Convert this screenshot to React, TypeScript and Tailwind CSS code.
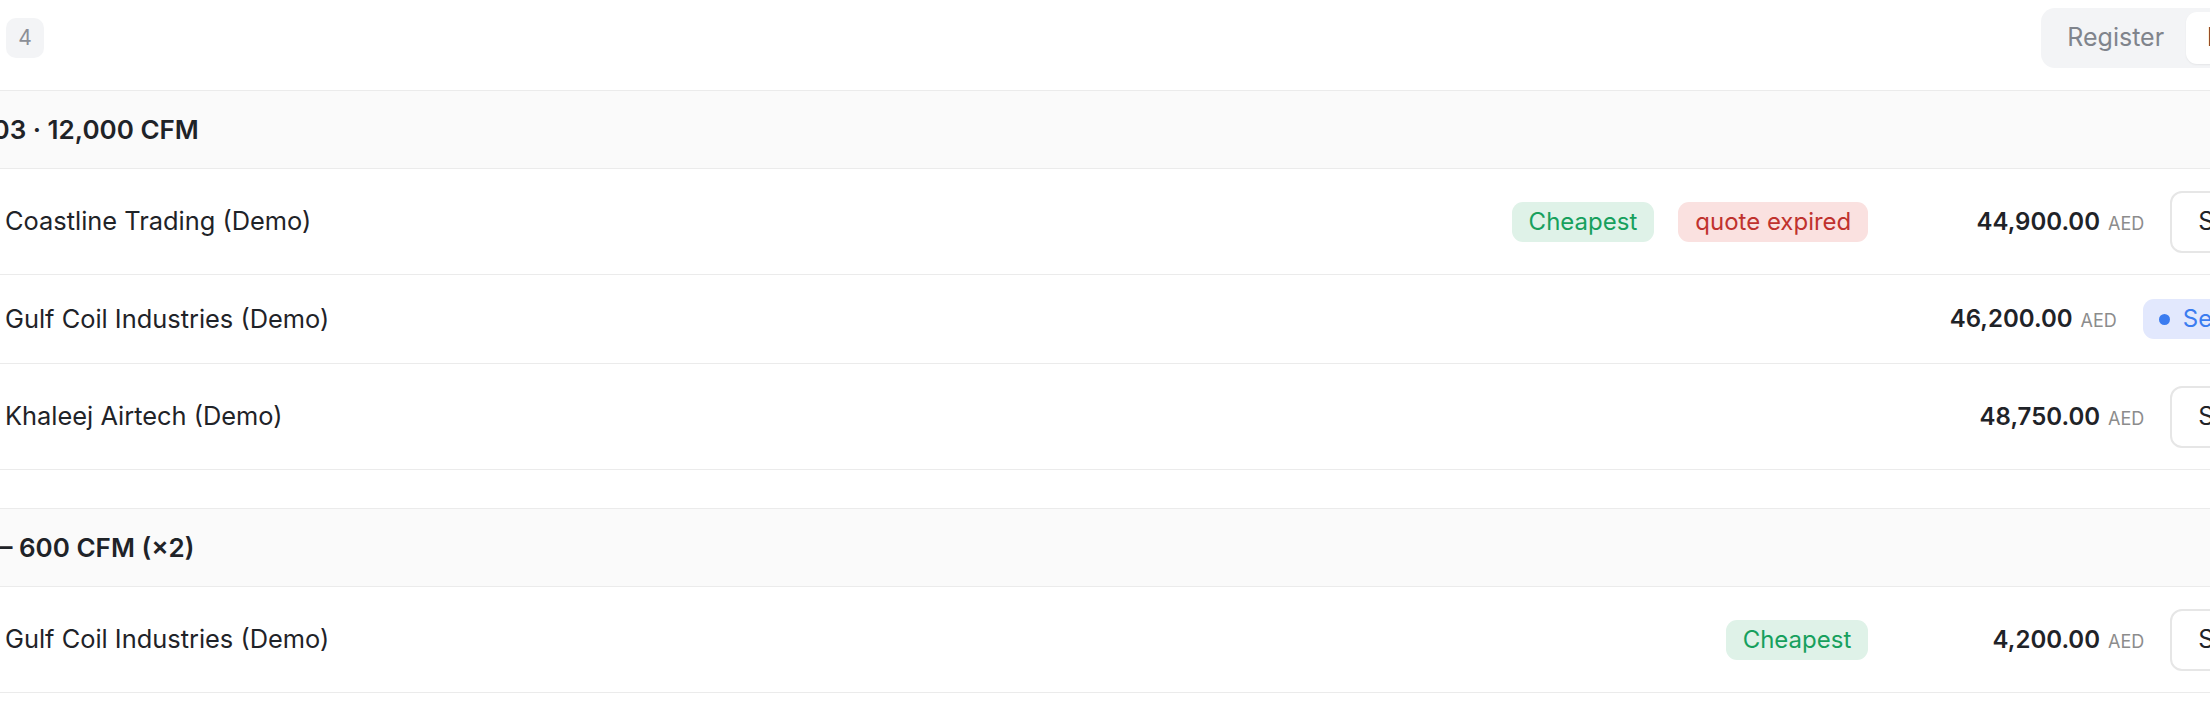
import React from "react";

type Row = {
  name: string;
  badges?: ("cheapest" | "expired")[];
  price: string;
  action: "select" | "selected";
};

function Badge({ kind }: { kind: "cheapest" | "expired" }) {
  if (kind === "cheapest") {
    return (
      <span className="inline-flex items-center h-[40px] px-[17px] rounded-[11px] bg-[#dff2e8] text-[#17a05d] text-[24px] leading-none">
        Cheapest
      </span>
    );
  }
  return (
    <span className="inline-flex items-center h-[40px] px-[17px] rounded-[11px] bg-[#fae1e0] text-[#c0322e] text-[24px] leading-none">
      quote expired
    </span>
  );
}

function Action({ kind }: { kind: "select" | "selected" }) {
  if (kind === "select") {
    return (
      <button className="h-[62px] px-[26px] rounded-[12px] border-2 border-[#e6e6e6] bg-white text-[#1f2328] text-[25px] leading-none">
        Select
      </button>
    );
  }
  return (
    <span className="inline-flex items-center gap-[13px] h-[40px] pl-[16px] pr-[18px] rounded-[11px] bg-[#e2e8fd] text-[#3b7cf0] text-[24px] leading-none">
      <span className="w-[11px] h-[11px] rounded-full bg-[#3b7cf0]" />
      Selected
    </span>
  );
}

function ItemRow({ row, tall }: { row: Row; tall: boolean }) {
  return (
    <div
      className={`flex items-center border-b border-[#ebebeb] pl-[105px] pr-[20px] ${
        tall ? "h-[106px]" : "h-[89px]"
      }`}
    >
      <div className="flex-1 text-[25.4px] text-[#1f2328] whitespace-nowrap">{row.name}</div>
      <div className="flex items-center gap-[24px]">
        {(row.badges ?? []).map((b) => (
          <Badge key={b} kind={b} />
        ))}
      </div>
      <div className="w-[276px] flex items-baseline justify-end gap-[8px]">
        <span className="text-[24px] font-semibold text-[#1f2328]">{row.price}</span>
        <span className="text-[18px] text-[#8c8c8c]">AED</span>
      </div>
      <div className="ml-[26px]">
        <Action kind={row.action} />
      </div>
    </div>
  );
}

function Group({ title, offset, rows }: { title: string; offset: string; rows: Row[] }) {
  return (
    <div className="border-t border-[#ebebeb]">
      <div className="h-[78px] flex items-center bg-[#fafafa] border-b border-[#ebebeb] pl-[100px]">
        <span className={`${offset} text-[26px] font-semibold text-[#1f2328] whitespace-nowrap`}>{title}</span>
      </div>
      {rows.map((r, i) => (
        <ItemRow key={i} row={r} tall={r.action === "select"} />
      ))}
    </div>
  );
}

export default function App() {
  return (
    <div className="w-[2210px] h-[720px] overflow-hidden bg-white font-['Inter','Noto_Sans',sans-serif]">
      <div className="ml-[-100px] w-[2420px]">
        <div className="h-[90px] pt-[8px]">
          <div className="flex items-center justify-between pl-[106px] pr-[18px]">
            <span className="inline-flex items-center justify-center w-[38px] h-[40px] rounded-[10px] bg-[#f3f4f6] text-[#8b8f97] text-[21px]">
              4
            </span>
            <div className="flex items-center h-[60px] p-[4px] rounded-[14px] bg-[#f3f4f6]">
              <span className="px-[22px] text-[25px] text-[#80848c]">Register</span>
              <span className="flex items-center h-[52px] px-[21px] rounded-[11px] bg-white text-[25px] text-[#1f2328] shadow-[0_1px_2px_rgba(0,0,0,0.06)]">
                Board
              </span>
            </div>
          </div>
        </div>
        <Group
          title="AHU-03 · 12,000 CFM"
          offset="ml-[-77px]"
          rows={[
            { name: "Coastline Trading (Demo)", badges: ["cheapest", "expired"], price: "44,900.00", action: "select" },
            { name: "Gulf Coil Industries (Demo)", price: "46,200.00", action: "selected" },
            { name: "Khaleej Airtech (Demo)", price: "48,750.00", action: "select" },
          ]}
        />
        <div className="h-[38px]" />
        <Group
          title="FCU-12 – 600 CFM (×2)"
          offset="ml-[-100px]"
          rows={[{ name: "Gulf Coil Industries (Demo)", badges: ["cheapest"], price: "4,200.00", action: "select" }]}
        />
      </div>
    </div>
  );
}
